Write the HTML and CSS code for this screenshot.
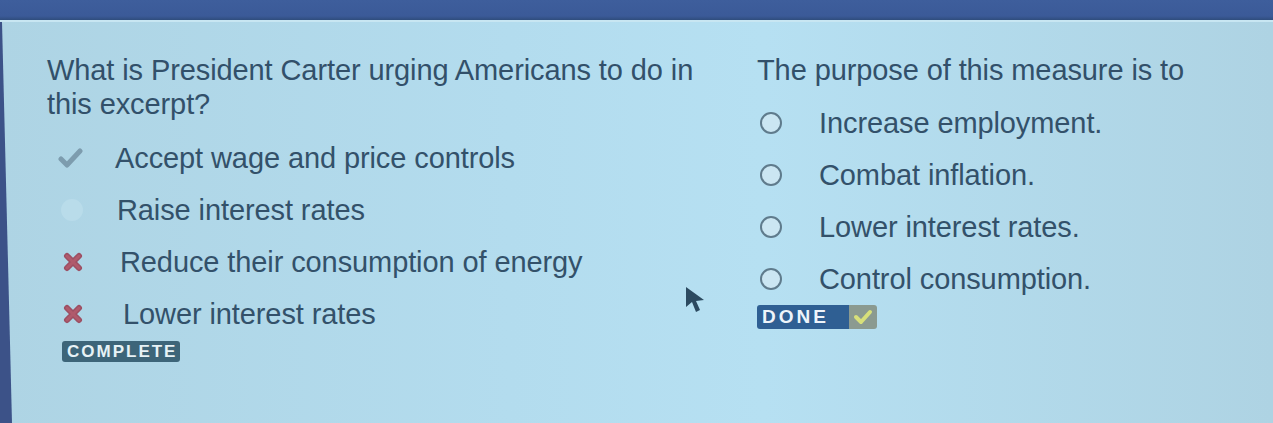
FILE: index.html
```html
<!DOCTYPE html>
<html>
<head>
<meta charset="utf-8">
<link rel="stylesheet" href="styles.css">
</head>
<body>
<div class="topbar"></div>
<div class="edge"></div>
<main class="page">
  <section class="col left">
    <p class="question">What is President Carter urging Americans to do in this excerpt?</p>
    <ul class="answers">
      <li class="answer"><span class="mark"><svg width="26" height="22" viewBox="0 0 26 22"><path d="M4 12 L10 18 L23 4" fill="none" stroke="#7d9cae" stroke-width="5" stroke-linecap="round" stroke-linejoin="round"/></svg></span><span class="txt t1">Accept wage and price controls</span></li>
      <li class="answer"><span class="mark"><span class="ghost"></span></span><span class="txt t2">Raise interest rates</span></li>
      <li class="answer"><span class="mark x"><svg width="20" height="20" viewBox="0 0 20 20"><path d="M4 4 L16 16 M16 4 L4 16" stroke="#9c4f63" stroke-width="6" stroke-linecap="round"/><path d="M4 4 L16 16 M16 4 L4 16" stroke="#b05a6c" stroke-width="3" stroke-linecap="round"/></svg></span><span class="txt t3">Reduce their consumption of energy</span></li>
      <li class="answer"><span class="mark x"><svg width="20" height="20" viewBox="0 0 20 20"><path d="M4 4 L16 16 M16 4 L4 16" stroke="#9c4f63" stroke-width="6" stroke-linecap="round"/><path d="M4 4 L16 16 M16 4 L4 16" stroke="#b05a6c" stroke-width="3" stroke-linecap="round"/></svg></span><span class="txt t4">Lower interest rates</span></li>
    </ul>
    <span class="badge complete">COMPLETE</span>
  </section>
  <section class="col right">
    <p class="question">The purpose of this measure is to</p>
    <ul class="choices">
      <li class="choice"><span class="radio"></span><span class="txt">Increase employment.</span></li>
      <li class="choice"><span class="radio"></span><span class="txt">Combat inflation.</span></li>
      <li class="choice"><span class="radio"></span><span class="txt">Lower interest rates.</span></li>
      <li class="choice"><span class="radio"></span><span class="txt">Control consumption.</span></li>
    </ul>
    <div class="done"><span class="done-label">DONE</span><span class="done-check"><svg width="22" height="18" viewBox="0 0 22 18"><path d="M4 9 L9 14 L18 4" fill="none" stroke="#d8e07a" stroke-width="4" stroke-linecap="round" stroke-linejoin="round"/></svg></span></div>
  </section>
  <svg class="cursor" width="26" height="30" viewBox="0 0 26 30"><path d="M3 2 L3 22 L9 17 L13 27 L17 25 L13 16 L21 15 Z" fill="#2c4a60"/></svg>
</main>
</body>
</html>
```
FILE: styles.css
```css
html, body {
  margin: 0;
  padding: 0;
}
body {
  width: 1273px;
  height: 423px;
  overflow: hidden;
  background: linear-gradient(90deg, #aed4e4 0%, #b3dcee 40%, #b6e0f2 60%, #aed3e3 100%);
  font-family: "Liberation Sans", Arial, sans-serif;
  color: #33516a;
  position: relative;
}
.topbar {
  height: 20px;
  background: linear-gradient(180deg, #3e5e9c 0%, #3b5a98 80%, #2f4d7d 100%);
  border-bottom: 2px solid #c8e6f2;
}
.edge {
  position: absolute;
  left: 0;
  top: 22px;
  width: 12px;
  height: 401px;
  background: #3c5288;
  clip-path: polygon(0 0, 2px 0, 100% 100%, 0 100%);
}
.page {
  display: grid;
  grid-template-columns: 710px 1fr;
  padding: 0 0 0 47px;
  position: relative;
}
.question {
  margin: 0;
  font-size: 29px;
  line-height: 34px;
  letter-spacing: -0.1px;
  color: #32506a;
}
.left .question {
  padding-top: 31px;
  width: 670px;
}
.right .question {
  padding-top: 31px;
}
.answers, .choices {
  list-style: none;
  margin: 0;
  padding: 0;
}
.answers {
  margin-top: 11px;
}
.answer {
  display: flex;
  align-items: center;
  height: 52px;
}
.mark {
  width: 68px;
  display: flex;
  justify-content: flex-start;
  padding-left: 10px;
  box-sizing: border-box;
}
.mark.x {
  padding-left: 16px;
}
.ghost {
  width: 22px;
  height: 22px;
  border-radius: 50%;
  background: #b9dcea;
  margin-left: 4px;
}
.txt {
  font-size: 29px;
  letter-spacing: -0.1px;
  color: #33516a;
}
.t2 { margin-left: 2px; }
.t3 { margin-left: 5px; }
.t4 { margin-left: 8px; }
.badge.complete {
  display: inline-block;
  margin: 1px 0 0 15px;
  background: #3d6579;
  color: #e6f2f6;
  font-weight: bold;
  font-size: 17px;
  letter-spacing: 2px;
  padding: 2px 3px 2px 5px;
  border-radius: 3px;
  line-height: 17px;
}
.left {
  display: flex;
  flex-direction: column;
  align-items: flex-start;
}
.choices {
  margin-top: 10px;
}
.choice {
  display: flex;
  align-items: center;
  height: 52px;
}
.radio {
  width: 18px;
  height: 18px;
  border: 2px solid #5f7b8c;
  border-radius: 50%;
  margin-left: 3px;
  margin-right: 37px;
  background: #cbe6f2;
}
.done {
  display: flex;
  width: 120px;
  height: 24px;
  border-radius: 3px;
  overflow: hidden;
}
.done-label {
  background: #2f5f93;
  color: #eef4fa;
  font-weight: bold;
  font-size: 19px;
  letter-spacing: 3px;
  line-height: 24px;
  padding-left: 5px;
  flex: 1;
}
.done-check {
  width: 28px;
  background: #8b9a90;
  display: flex;
  align-items: center;
  justify-content: center;
}
.cursor {
  position: absolute;
  left: 683px;
  top: 263px;
}
```
